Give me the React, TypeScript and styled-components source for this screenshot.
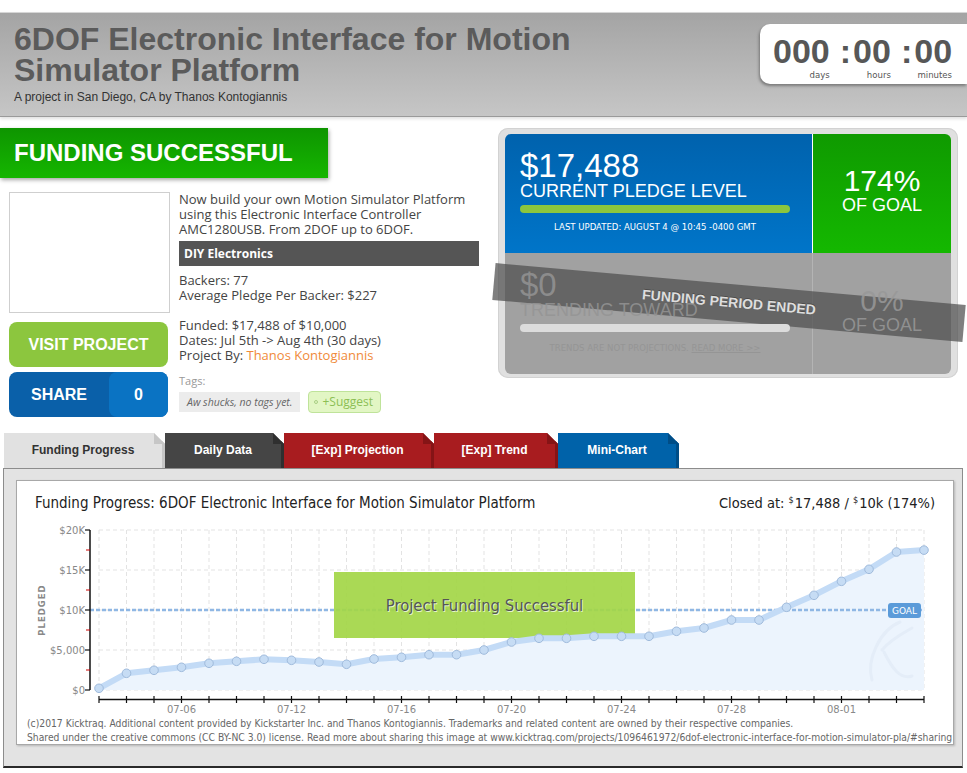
import React from "react";
import styled, { createGlobalStyle } from "styled-components";

const GlobalStyle = createGlobalStyle`
  html, body { margin: 0; padding: 0; background: #fff; }
  body { font-family: "Liberation Sans", Arial, sans-serif; overflow: hidden; }
  * { box-sizing: border-box; }
`;

const NARROW = `"Liberation Sans Narrow", "DejaVu Sans Condensed", "Liberation Sans", sans-serif`;
const OPEN = `"Open Sans", "Liberation Sans", sans-serif`;

const Page = styled.div`
  width: 967px;
  padding-top: 12px;
`;

/* ---------- header ---------- */
const Header = styled.header`
  height: 105px;
  display: flex;
  justify-content: space-between;
  align-items: flex-start;
  background: linear-gradient(180deg, #a4a4a4 0%, #c6c6c6 100%);
  border-top: 1px solid #d6d6d6;
  border-bottom: 1px solid #9a9a9a;
  box-shadow: 0 2px 3px rgba(0, 0, 0, 0.12);
`;

const TitleBlock = styled.div`
  padding: 11px 0 0 14px;
`;

const Title = styled.h1`
  margin: 0;
  width: 580px;
  font: bold 32px/31px "Liberation Sans", Arial, sans-serif;
  color: #5b5b5b;
`;

const Subtitle = styled.div`
  margin-top: 4px;
  font: 12px/14px "Liberation Sans", Arial, sans-serif;
  color: #333;
`;

const Timer = styled.div`
  margin-top: 11px;
  width: 207px;
  height: 60px;
  background: #fff;
  border-radius: 10px 0 0 10px;
  box-shadow: -1px 2px 3px rgba(0, 0, 0, 0.35);
  display: flex;
  align-items: flex-start;
  padding: 12px 0 0 13px;
`;

const TimeGroup = styled.div`
  display: flex;
  flex-direction: column;
  align-items: flex-end;
`;

const Digits = styled.span`
  font: bold 34px/31px "Liberation Sans", Arial, sans-serif;
  color: #575757;
`;

const TimeLabel = styled.span`
  font: 9.5px/10px ${NARROW};
  color: #555;
  margin-top: 3px;
`;

const Colon = styled.span`
  font: bold 34px/31px "Liberation Sans", Arial, sans-serif;
  color: #575757;
  margin: 0 2px 0 10px;
`;

/* ---------- main ---------- */
const Main = styled.main`
  display: flex;
  align-items: flex-start;
  margin-top: 11px;
`;

const LeftCol = styled.div`
  width: 490px;
`;

const Banner = styled.div`
  width: 328px;
  height: 50px;
  display: flex;
  align-items: center;
  padding-left: 14px;
  background: linear-gradient(180deg, #0e9500 0%, #15b600 100%);
  box-shadow: 1px 2px 4px rgba(0, 0, 0, 0.35);
  color: #fff;
  font: bold 24px "Liberation Sans", Arial, sans-serif;
`;

const InfoRow = styled.div`
  display: flex;
  margin-top: 14px;
  padding-left: 9px;
  gap: 9px;
`;

const MediaCol = styled.div`
  width: 161px;
  display: flex;
  flex-direction: column;
`;

const ImageBox = styled.div`
  width: 161px;
  height: 121px;
  border: 1px solid #cfcfcf;
  background: #fff;
`;

const VisitButton = styled.div`
  margin-top: 9px;
  width: 159px;
  height: 45px;
  border-radius: 8px;
  background: #8cc63e;
  color: #fff;
  font: bold 16px/45px "Liberation Sans", Arial, sans-serif;
  text-align: center;
`;

const ShareButton = styled.div`
  margin-top: 5px;
  width: 159px;
  height: 45px;
  border-radius: 8px;
  background: #0a60a9;
  color: #fff;
  display: flex;
  font: bold 16px/45px "Liberation Sans", Arial, sans-serif;
`;

const ShareLabel = styled.span`
  width: 100px;
  text-align: center;
`;

const ShareCount = styled.span`
  flex: 1;
  text-align: center;
  background: #0a73c3;
  border-radius: 8px;
`;

const TextCol = styled.div`
  width: 300px;
  font: 13px/15px ${OPEN};
  color: #444;
`;

const Para = styled.p<{ $gap?: number }>`
  margin: ${(p) => p.$gap ?? 0}px 0 0;
`;

const CategoryBar = styled.div`
  margin-top: 4px;
  height: 25px;
  background: #555;
  color: #fff;
  padding-left: 5px;
  font: bold 12px/25px ${OPEN};
`;

const Link = styled.span`
  color: #f08a3a;
`;

const TagsLabel = styled.div`
  margin-top: 10px;
  font: 11px/15px ${OPEN};
  color: #999;
`;

const ChipRow = styled.div`
  display: flex;
  align-items: center;
  gap: 8px;
  margin-top: 3px;
`;

const EmptyTag = styled.span`
  height: 20px;
  padding: 0 8px;
  background: #ececec;
  color: #666;
  font: italic 10.5px/20px ${OPEN};
`;

const SuggestTag = styled.span`
  height: 22px;
  padding: 0 7px 0 5px;
  background: #e2f6c4;
  border: 1px solid #bfe39a;
  border-radius: 4px;
  color: #8cbf55;
  font: 12px/20px ${OPEN};
  display: flex;
  align-items: center;
  gap: 4px;
`;

const Dot = styled.span`
  width: 4px;
  height: 4px;
  border-radius: 50%;
  border: 1px solid #a9cf83;
`;

/* ---------- stats panel ---------- */
const StatsPanel = styled.section`
  position: relative;
  margin-left: 8px;
  width: 460px;
  height: 250px;
  padding: 6px 7px 4px;
  background: #e0e0e0;
  border-radius: 10px;
  box-shadow: inset 0 0 0 1px #d2d2d2;
`;

const StatsGrid = styled.div`
  height: 100%;
  display: grid;
  grid-template-columns: 307px 139px;
  grid-template-rows: 119px 121px;
  border-radius: 6px;
  overflow: hidden;
`;

const MainCell = styled.div<{ $faded?: boolean }>`
  padding: 15px 0 0 15px;
  background: ${(p) =>
    p.$faded ? "#a1a1a1" : "linear-gradient(180deg, #0062ad 0%, #0075c9 100%)"};
  color: ${(p) => (p.$faded ? "rgba(148,148,148,0.85)" : "#fff")};
`;

const GoalCell = styled.div<{ $faded?: boolean }>`
  padding-top: ${(p) => (p.$faded ? 33 : 32)}px;
  text-align: center;
  border-left: 1px solid ${(p) => (p.$faded ? "#b4b4b4" : "#fff")};
  background: ${(p) =>
    p.$faded ? "#a1a1a1" : "linear-gradient(180deg, #0f9a00 0%, #14b800 100%)"};
  color: ${(p) => (p.$faded ? "rgba(152,152,152,0.85)" : "#fff")};
`;

/* faded texts sit above the rotated band, as in the original */
const Layer = styled.div`
  position: relative;
  z-index: 2;
`;

const BigNumber = styled.div`
  font: 33px/33px "Liberation Sans", Arial, sans-serif;
`;

const Percent = styled.div`
  font: 30px/30px "Liberation Sans", Arial, sans-serif;
`;

const BigLabel = styled.div`
  font: 18px/18px "Liberation Sans", Arial, sans-serif;
`;

const Meter = styled.div<{ $color: string }>`
  margin-top: 5px;
  width: 270px;
  height: 8px;
  border-radius: 4px;
  background: ${(p) => p.$color};
`;

const Note = styled.div<{ $faded?: boolean }>`
  margin-top: ${(p) => (p.$faded ? 10 : 8)}px;
  width: 270px;
  text-align: center;
  font: 9.5px/11px ${NARROW};
  color: ${(p) => (p.$faded ? "#959595" : "#fff")};
`;

const Underline = styled.span`
  text-decoration: underline;
`;

const EndedBand = styled.div`
  position: absolute;
  z-index: 1;
  left: -5px;
  top: 156px;
  width: 472px;
  height: 37px;
  transform: rotate(5.1deg);
  background: rgba(78, 78, 78, 0.72);
  color: #dedede;
  font: bold 14px/37px "Liberation Sans", Arial, sans-serif;
  text-align: center;
  text-shadow: 0 -1px 0 rgba(0, 0, 0, 0.25);
`;

/* ---------- tabs ---------- */
const TabBar = styled.nav`
  display: flex;
  margin-top: 16px;
  padding-left: 4px;
  height: 35px;
`;

const Tab = styled.div<{ $bg: string; $edge: string; $fg: string; $w: number }>`
  position: relative;
  width: ${(p) => p.$w}px;
  height: 35px;
  padding-right: 3px;
  background: ${(p) => p.$bg};
  box-shadow: inset -3px 0 0 ${(p) => p.$edge};
  clip-path: polygon(0 0, calc(100% - 11px) 0, 100% 11px, 100% 100%, 0 100%);
  color: ${(p) => p.$fg};
  font: bold 12px/35px "Liberation Sans", Arial, sans-serif;
  text-align: center;

  &::before {
    content: "";
    position: absolute;
    top: 0;
    right: 0;
    width: 11px;
    height: 11px;
    background: ${(p) => p.$edge};
  }
`;

/* ---------- chart ---------- */
const ChartWrap = styled.section`
  margin-left: 3px;
  width: 960px;
  border: 1px solid #8c8c8c;
  border-bottom: 2px solid #2a2a2a;
  background: #e3e3e3;
  padding: 11px 8px 21px 12px;
`;

const ChartCard = styled.div`
  width: 938px;
  height: 265px;
  background: #fff;
  border: 1px solid #a8a8a8;
  box-shadow: 1px 1px 2px rgba(0, 0, 0, 0.2);
  display: flex;
  flex-direction: column;
  overflow: hidden;
`;

const ChartHeader = styled.div`
  height: 44px;
  padding: 0 18px;
  display: flex;
  align-items: center;
  justify-content: space-between;
  font: 15px ${NARROW};
  color: #222;
`;

const Closed = styled.span`
  font-size: 14.5px;
`;

const Sup = styled.sup`
  font-size: 9px;
  vertical-align: 5px;
  margin-right: 1px;
`;

const ChartSvg = styled.svg`
  display: block;
`;

const ChartFooter = styled.div`
  padding: 1px 0 0 10px;
  font: 10.25px/14px ${NARROW};
  color: #666;
  white-space: nowrap;
`;

const X0 = 99;
const DX = 27.5;
const BASE = 690;
const PX = 160 / 20000;
const pledged = [
  212, 2088, 2463, 2838, 3338, 3588, 3838, 3713, 3500, 3213, 3875, 4088, 4413, 4413,
  5000, 6000, 6463, 6463, 6713, 6713, 6713, 7338, 7750, 8750, 8750, 10338, 11838,
  13588, 15088, 17250, 17488,
];
const pts = pledged.map((v, i) => [X0 + i * DX, BASE - v * PX] as const);
const xLabels: [number, string][] = [
  [3, "07-06"], [7, "07-12"], [11, "07-16"], [15, "07-20"], [19, "07-24"], [23, "07-28"], [27, "08-01"],
];
const yLabels: [number, string][] = [
  [530, "$20K"], [570, "$15K"], [610, "$10K"], [650, "$5,000"], [690, "$0"],
];
const lastX = X0 + 30 * DX;

function Chart() {
  const linePath = pts.map(([x, y], i) => `${i ? "L" : "M"}${x},${y}`).join(" ");
  const areaPath = `${linePath} L${lastX},${BASE} L${X0},${BASE} Z`;
  return (
    <ChartSvg width={936} height={190} viewBox="17 525 936 190">
      {pts.map(([x], i) => (
        <line key={`v${i}`} x1={x} x2={x} y1={530} y2={690} stroke="#e3e3e3" strokeDasharray="4 3" />
      ))}
      {[530, 570, 610, 650, 690].map((y) => (
        <line key={`h${y}`} x1={X0} x2={lastX} y1={y} y2={y} stroke="#e3e3e3" strokeDasharray="4 3" />
      ))}
      <path d={areaPath} fill="#ecf4fd" />
      <path
        d="M900 622 C 880 630, 866 660, 872 680 M882 650 C 890 640, 905 632, 912 628 M884 652 C 892 668, 900 680, 912 676"
        stroke="#e4edf8"
        strokeWidth={3}
        fill="none"
        strokeLinecap="round"
      />
      <line x1={90} x2={lastX} y1={610} y2={610} stroke="#8fb7e4" strokeWidth={2.5} strokeDasharray="4 2" />
      <rect x={334} y={572} width={301} height={66} fill="#a3d646" opacity={0.92} />
      <text x={485.5} y={611.5} textAnchor="middle" fontFamily={NARROW} fontSize={16.5} fill="#fff" opacity={0.7}>
        Project Funding Successful
      </text>
      <text x={484.5} y={610.5} textAnchor="middle" fontFamily={NARROW} fontSize={16.5} fill="#555">
        Project Funding Successful
      </text>
      <path d={linePath} fill="none" stroke="#c3dbf6" strokeWidth={6} strokeLinejoin="round" strokeLinecap="round" />
      {pts.map(([x, y], i) => (
        <circle key={`p${i}`} cx={x} cy={y} r={4.3} fill="#c6dcf4" stroke="#a0bbdc" strokeWidth={1} />
      ))}
      <rect x={888} y={603} width={33} height={15} rx={3} fill="#5b9bd9" />
      <text x={904.5} y={614} textAnchor="middle" fontFamily="DejaVu Sans, sans-serif" fontSize={9} fill="#fff">
        GOAL
      </text>
      <line x1={90} x2={90} y1={530} y2={690} stroke="#111" strokeWidth={1.5} />
      {[530, 570, 610, 650, 690].map((y) => (
        <line key={`t${y}`} x1={85} x2={90} y1={y} y2={y} stroke="#111" strokeWidth={1.2} />
      ))}
      {[550, 590, 630, 670].map((y) => (
        <line key={`r${y}`} x1={86} x2={90} y1={y} y2={y} stroke="#c00" strokeWidth={1} />
      ))}
      {yLabels.map(([y, t]) => (
        <text key={t} x={85} y={y + 3.5} textAnchor="end" fontFamily="DejaVu Sans, sans-serif" fontSize={10} fill="#888">
          {t}
        </text>
      ))}
      <text
        x={45}
        y={610}
        transform="rotate(-90 45 610)"
        textAnchor="middle"
        fontFamily="DejaVu Sans, sans-serif"
        fontSize={8.5}
        fontWeight="bold"
        letterSpacing={1}
        fill="#888"
      >
        PLEDGED
      </text>
      <line x1={X0} x2={lastX} y1={699.5} y2={699.5} stroke="#111" strokeWidth={1.5} />
      {pts.map(([x], i) => (
        <line key={`xt${i}`} x1={x} x2={x} y1={696} y2={703} stroke="#111" strokeWidth={1.2} />
      ))}
      {xLabels.map(([i, t]) => (
        <text key={t} x={X0 + i * DX} y={712.5} textAnchor="middle" fontFamily="DejaVu Sans, sans-serif" fontSize={10} fill="#888">
          {t}
        </text>
      ))}
    </ChartSvg>
  );
}

const tabs = [
  { label: "Funding Progress", bg: "#e1e1e1", edge: "#c6c6c6", fg: "#333", w: 161 },
  { label: "Daily Data", bg: "#454545", edge: "#2f2f2f", fg: "#fff", w: 119 },
  { label: "[Exp] Projection", bg: "#a81c1f", edge: "#851416", fg: "#fff", w: 150 },
  { label: "[Exp] Trend", bg: "#a81c1f", edge: "#851416", fg: "#fff", w: 124 },
  { label: "Mini-Chart", bg: "#0062a9", edge: "#004d86", fg: "#fff", w: 121 },
];

export default function App() {
  return (
    <Page>
      <GlobalStyle />
      <Header>
        <TitleBlock>
          <Title>6DOF Electronic Interface for Motion Simulator Platform</Title>
          <Subtitle>A project in San Diego, CA by Thanos Kontogiannis</Subtitle>
        </TitleBlock>
        <Timer>
          <TimeGroup>
            <Digits>000</Digits>
            <TimeLabel>days</TimeLabel>
          </TimeGroup>
          <Colon>:</Colon>
          <TimeGroup>
            <Digits>00</Digits>
            <TimeLabel>hours</TimeLabel>
          </TimeGroup>
          <Colon>:</Colon>
          <TimeGroup>
            <Digits>00</Digits>
            <TimeLabel>minutes</TimeLabel>
          </TimeGroup>
        </Timer>
      </Header>

      <Main>
        <LeftCol>
          <Banner>FUNDING SUCCESSFUL</Banner>
          <InfoRow>
            <MediaCol>
              <ImageBox />
              <VisitButton>VISIT PROJECT</VisitButton>
              <ShareButton>
                <ShareLabel>SHARE</ShareLabel>
                <ShareCount>0</ShareCount>
              </ShareButton>
            </MediaCol>
            <TextCol>
              <Para>
                Now build your own Motion Simulator Platform using this Electronic Interface Controller
                AMC1280USB. From 2DOF up to 6DOF.
              </Para>
              <CategoryBar>DIY Electronics</CategoryBar>
              <Para $gap={7}>
                Backers: 77
                <br />
                Average Pledge Per Backer: $227
              </Para>
              <Para $gap={15}>
                Funded: $17,488 of $10,000
                <br />
                Dates: Jul 5th -&gt; Aug 4th (30 days)
                <br />
                Project By: <Link>Thanos Kontogiannis</Link>
              </Para>
              <TagsLabel>Tags:</TagsLabel>
              <ChipRow>
                <EmptyTag>Aw shucks, no tags yet.</EmptyTag>
                <SuggestTag>
                  <Dot />
                  +Suggest
                </SuggestTag>
              </ChipRow>
            </TextCol>
          </InfoRow>
        </LeftCol>

        <StatsPanel>
          <StatsGrid>
            <MainCell>
              <BigNumber>$17,488</BigNumber>
              <BigLabel>CURRENT PLEDGE LEVEL</BigLabel>
              <Meter $color="#8cc63e" />
              <Note>LAST UPDATED: AUGUST 4 @ 10:45 -0400 GMT</Note>
            </MainCell>
            <GoalCell>
              <Percent>174%</Percent>
              <BigLabel>OF GOAL</BigLabel>
            </GoalCell>
            <MainCell $faded>
              <Layer>
                <BigNumber>$0</BigNumber>
                <BigLabel>TRENDING TOWARD</BigLabel>
                <Meter $color="#dcdcdc" />
                <Note $faded>
                  TRENDS ARE NOT PROJECTIONS. <Underline>READ MORE &gt;&gt;</Underline>
                </Note>
              </Layer>
            </MainCell>
            <GoalCell $faded>
              <Layer>
                <Percent>0%</Percent>
                <BigLabel>OF GOAL</BigLabel>
              </Layer>
            </GoalCell>
          </StatsGrid>
          <EndedBand>FUNDING PERIOD ENDED</EndedBand>
        </StatsPanel>
      </Main>

      <TabBar>
        {tabs.map((t) => (
          <Tab key={t.label} $bg={t.bg} $edge={t.edge} $fg={t.fg} $w={t.w}>
            {t.label}
          </Tab>
        ))}
      </TabBar>

      <ChartWrap>
        <ChartCard>
          <ChartHeader>
            <span>Funding Progress: 6DOF Electronic Interface for Motion Simulator Platform</span>
            <Closed>
              Closed at: <Sup>$</Sup>17,488 / <Sup>$</Sup>10k (174%)
            </Closed>
          </ChartHeader>
          <Chart />
          <ChartFooter>
            (c)2017 Kicktraq. Additional content provided by Kickstarter Inc. and Thanos Kontogiannis. Trademarks
            and related content are owned by their respective companies.
            <br />
            Shared under the creative commons (CC BY-NC 3.0) license. Read more about sharing this image at
            www.kicktraq.com/projects/1096461972/6dof-electronic-interface-for-motion-simulator-pla/#sharing
          </ChartFooter>
        </ChartCard>
      </ChartWrap>
    </Page>
  );
}
